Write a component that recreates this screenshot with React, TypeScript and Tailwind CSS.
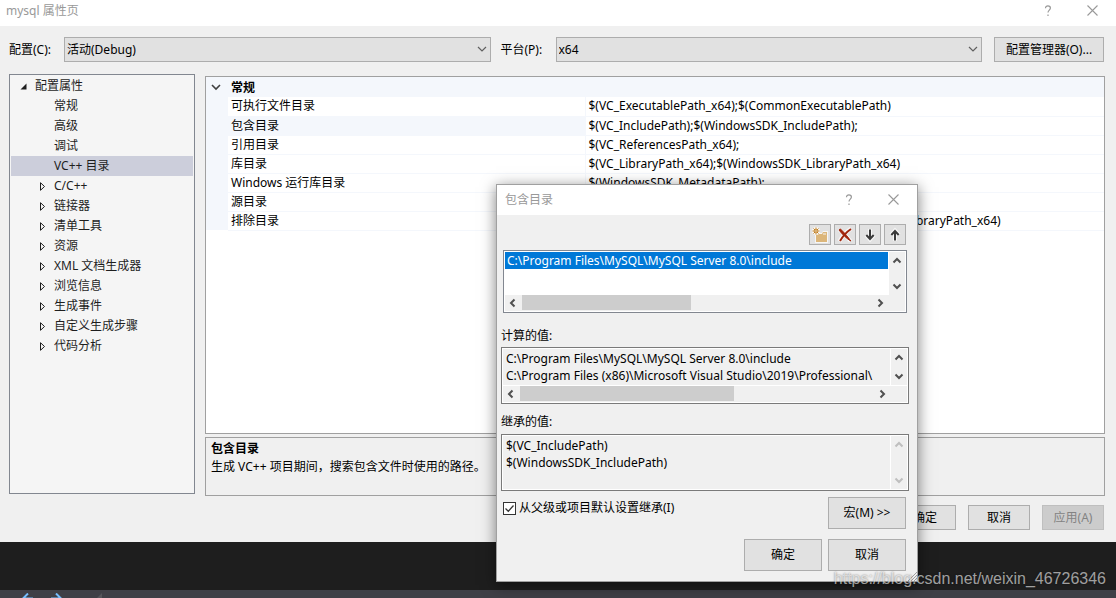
import React, { useState } from 'react';

const TREE_ITEMS = [
    { label: '常规', branch: false },
    { label: '高级', branch: false },
    { label: '调试', branch: false },
    { label: 'VC++ 目录', branch: false },
    { label: 'C/C++', branch: true },
    { label: '链接器', branch: true },
    { label: '清单工具', branch: true },
    { label: '资源', branch: true },
    { label: 'XML 文档生成器', branch: true },
    { label: '浏览信息', branch: true },
    { label: '生成事件', branch: true },
    { label: '自定义生成步骤', branch: true },
    { label: '代码分析', branch: true },
];

const PROPERTIES = [
    { name: '可执行文件目录', value: '$(VC_ExecutablePath_x64);$(CommonExecutablePath)' },
    { name: '包含目录', value: '$(VC_IncludePath);$(WindowsSDK_IncludePath);' },
    { name: '引用目录', value: '$(VC_ReferencesPath_x64);' },
    { name: '库目录', value: '$(VC_LibraryPath_x64);$(WindowsSDK_LibraryPath_x64)' },
    { name: 'Windows 运行库目录', value: '$(WindowsSDK_MetadataPath);' },
    { name: '源目录', value: '$(VC_SourcePath);' },
    { name: '排除目录', value: '$(CommonExcludePath);$(VC_ExecutablePath_x64);$(VC_LibraryPath_x64)' },
];

const COMPUTED = [
    'C:\\Program Files\\MySQL\\MySQL Server 8.0\\include',
    'C:\\Program Files (x86)\\Microsoft Visual Studio\\2019\\Professional\\',
].join('\n');

const INHERITED = '$(VC_IncludePath)\n$(WindowsSDK_IncludePath)';

/* Window chrome */

const TitleBar = ({ title, className }: { title: string; className: string }) => (
    <div className={`flex items-center bg-white text-[#999999] ${className}`}>
        <span className="flex-1">{title}</span>
        <button type="button" aria-label="帮助" className="flex w-5 justify-center">
            <svg width="8" height="12" viewBox="0 0 8 12" fill="none" stroke="currentColor" strokeWidth="1.2">
                <path d="M1.5 3.2C1.5 1.6 2.5.9 3.9.9c1.500 0 2.500.8 2.500 2.100 0 2-2.400 2.200-2.400 4.600M4 9.600v1.500" />
            </svg>
        </button>
        <button type="button" aria-label="关闭" className="ml-6 flex w-5 justify-center">
            <svg width="11" height="11" viewBox="0 0 11 11" stroke="currentColor" strokeWidth="1.1">
                <path d="M.5.5l10 10M10.500.5l-10 10" />
            </svg>
        </button>
    </div>
);

interface ComboProps {
    id: string;
    label: string;
    options: string[];
}

const Combo: React.FC<ComboProps> = ({ id, label, options }) => (
    <div className="flex flex-1 items-center">
        <label htmlFor={id} className="shrink-0 basis-[54px] whitespace-nowrap">{label}</label>
        <div className="relative ml-px flex-1">
            <select
                id={id}
                className="block h-[25px] w-full appearance-none border border-[#adadad] bg-[#e1e1e1] pl-0.5 pr-6 pt-px"
            >
                {options.map(option => (
                    <option key={option}>{option}</option>
                ))}
            </select>
            <svg
                className="pointer-events-none absolute right-1 top-[9px] text-[#606060]"
                width="10" height="7" viewBox="0 0 10 7" fill="none" stroke="currentColor" strokeWidth="1.2"
            >
                <path d="M1 1l4 4 4-4" />
            </svg>
        </div>
    </div>
);

interface PushButtonProps {
    className: string;
    disabled?: boolean;
    children: React.ReactNode;
}

const PushButton: React.FC<PushButtonProps> = ({ className, disabled, children }) => (
    <button
        type="button"
        disabled={disabled}
        className={`border border-[#adadad] bg-[#e1e1e1] whitespace-nowrap disabled:border-[#bfbfbf] disabled:bg-[#cccccc] disabled:text-[#838383] ${className}`}
    >
        {children}
    </button>
);

const ToolButton = ({ label, children }: { label: string; children: React.ReactNode }) => (
    <button
        type="button"
        aria-label={label}
        className="flex h-[21px] w-[22px] items-center justify-center border border-[#adadad] bg-[#e1e1e1]"
    >
        <svg width="16" height="16" viewBox="0 0 16 16" fill="none">
            {children}
        </svg>
    </button>
);

/* Scroll bars */

const ARROWS = {
    up: 'M1.500 6.500L5 3l3.500 3.500',
    down: 'M1.500 3.500L5 7l3.500-3.500',
    left: 'M6.500 1.500L3 5l3.500 3.500',
    right: 'M3.500 1.500L7 5 3.500 8.500',
};

const ScrollArrow = ({ dir }: { dir: keyof typeof ARROWS }) => (
    <svg width="10" height="10" viewBox="0 0 10 10" fill="none" stroke="currentColor" strokeWidth="2">
        <path d={ARROWS[dir]} />
    </svg>
);

const VerticalBar = ({ className }: { className: string }) => (
    <div className={`flex w-4 shrink-0 flex-col items-center justify-between bg-[#f0f0f0] ${className}`}>
        <ScrollArrow dir="up" />
        <ScrollArrow dir="down" />
    </div>
);

const HorizontalBar = ({ thumb }: { thumb: string }) => (
    <div className="mr-4 flex h-[15px] items-center justify-between bg-[#f0f0f0] pl-[3px] pr-1 text-[#505050]">
        <ScrollArrow dir="left" />
        <div className="ml-1 h-full flex-1">
            <div className={`h-full bg-[#cdcdcd] ${thumb}`} />
        </div>
        <ScrollArrow dir="right" />
    </div>
);

const PropertyTree = () => {
    const [selected, setSelected] = useState('VC++ 目录');

    return (
        <div className="mb-0.5 w-[186px] shrink-0 border border-[#828790] bg-[#f5f5f5] p-px text-[#1e1e1e]">
            <div className="flex h-5 items-center">
                <svg className="ml-[9px] mr-2" width="7" height="7" viewBox="0 0 7 7">
                    <path d="M6.500.5v6h-6z" fill="#1e1e1e" />
                </svg>
                配置属性
            </div>
            <ul>
                {TREE_ITEMS.map(item => (
                    <li
                        key={item.label}
                        onClick={() => setSelected(item.label)}
                        className={`flex h-5 items-center ${item.label === selected ? 'bg-[#cccedb]' : ''}`}
                    >
                        <span className="w-[43px] shrink-0 pl-7">
                            {item.branch && (
                                <svg width="7" height="9" viewBox="0 0 7 9" fill="none" stroke="#1e1e1e">
                                    <path d="M1.500.7v7.600l4-3.800z" />
                                </svg>
                            )}
                        </span>
                        {item.label}
                    </li>
                ))}
            </ul>
        </div>
    );
};

const PropertyGrid = () => (
    <div className="min-h-[358px] border border-[#a0a0a0] bg-white">
        <table className="w-full table-fixed border-collapse text-left">
            <colgroup>
                <col className="w-[22px]" />
                <col className="w-[357px]" />
                <col />
            </colgroup>
            <thead>
                <tr className="h-5 bg-[#f4f7fc]">
                    <th className="p-0">
                        <svg className="ml-[5px]" width="10" height="7" viewBox="0 0 10 7" fill="none" stroke="#404040" strokeWidth="1.600">
                            <path d="M1 1l4 4 4-4" />
                        </svg>
                    </th>
                    <th colSpan={2} className="p-0 pl-[3px] pt-0.5 font-bold">常规</th>
                </tr>
            </thead>
            <tbody>
                {PROPERTIES.map(prop => (
                    <tr key={prop.name} className="h-[19px]">
                        <td className="bg-[#f4f7fc] p-0" />
                        <td
                            className={`border-b border-r border-[#f4f7fc] p-0 pl-[3px] ${prop.name === '包含目录' ? 'bg-[#f4f7fc]' : ''}`}
                        >
                            {prop.name}
                        </td>
                        <td className="whitespace-nowrap border-b border-[#f4f7fc] p-0 pl-[3px]">
                            {prop.value}
                        </td>
                    </tr>
                ))}
            </tbody>
        </table>
    </div>
);

const IncludeDialog = () => {
    const [inherit, setInherit] = useState(true);

    return (
        <div
            role="dialog"
            aria-label="包含目录"
            className="absolute left-[496px] top-[184px] w-[422px] border border-[#a0a0a0] bg-[#f0f0f0] shadow-[0_3px_14px_rgba(0,0,0,0.5)]"
        >
            <TitleBar title="包含目录" className="h-[30px] pb-px pl-2 pr-3.5" />

            <div className="flex flex-col px-1 pb-2.5 pt-[9px]">
                <div className="flex justify-end gap-[3px] pr-[7px]">
                    <ToolButton label="新行">
                        <path d="M3 6h7l1-2h5v12H3z" fill="#f6f6f6" />
                        <path d="M4 7h6l1-2h4v10H4z" fill="#dcb67a" />
                        <path d="M11 7h3" stroke="#f6f6f6" />
                        <circle cx="4" cy="4" r="4" fill="#f6f6f6" />
                        <path d="M4 .5v2M4 5.500v2M.5 4h2M5.500 4h2M1.500 1.500l1.500 1.500M5 5l1.500 1.500M6.500 1.500L5 3M3 5L1.500 6.500" stroke="#c27d1a" />
                        <circle cx="4" cy="4" r="1.300" stroke="#c27d1a" />
                    </ToolButton>
                    <ToolButton label="删除">
                        <path d="M2 2.500c4 3 8 7 11.500 11.500M14 1.500C9 5 5 9.500 2.500 14.500" stroke="#f6f6f6" strokeWidth="4" />
                        <path d="M2 3c1-1.500 2-1 3 .5 3 3 6 6.500 8.800 10.500C10 12 5 7 2 3z" fill="#a1260d" stroke="#a1260d" />
                        <path d="M14 2C9.500 5 6 9 3 14" stroke="#a1260d" strokeWidth="2" />
                    </ToolButton>
                    <ToolButton label="下移">
                        <path d="M8 2v11M4 8l4 4.500L12 8" stroke="#f6f6f6" strokeWidth="4" />
                        <path d="M8 2.500V12M4.300 8L8 12l3.700-4" stroke="#3a3a3a" strokeWidth="2" />
                    </ToolButton>
                    <ToolButton label="上移">
                        <path d="M8 14V3M4 8l4-4.500L12 8" stroke="#f6f6f6" strokeWidth="4" />
                        <path d="M8 13.500V4M4.300 8L8 4l3.700 4" stroke="#3a3a3a" strokeWidth="2" />
                    </ToolButton>
                </div>

                <div className="ml-0.5 mr-1.5 mt-[5px] border border-[#828790] bg-white p-px">
                    <div className="flex">
                        <ul role="listbox" aria-label="包含目录" className="mr-px h-[43px] min-w-0 flex-1">
                            <li
                                role="option"
                                aria-selected="true"
                                className="h-[17px] whitespace-nowrap bg-[#0078d7] pl-0.5 leading-[18px] text-white"
                            >
                                C:\Program Files\MySQL\MySQL Server 8.0\include
                            </li>
                        </ul>
                        <VerticalBar className="py-1 text-[#505050]" />
                    </div>
                    <div className="bg-[#f0f0f0]">
                        <HorizontalBar thumb="w-[48%]" />
                        <div className="h-px" />
                    </div>
                </div>

                <label htmlFor="computed" className="mt-[13px] h-[18px] leading-5">计算的值:</label>
                <div className="mr-1 mt-[3px] border border-[#7a7a7a] bg-white p-px">
                    <div className="flex">
                        <textarea
                            id="computed"
                            readOnly
                            wrap="off"
                            value={COMPUTED}
                            className="mr-px block h-9 min-w-0 flex-1 resize-none overflow-hidden border-r-4 border-[#f0f0f0] bg-[#f0f0f0] pl-[3px] pt-px leading-[17px] outline-none"
                        />
                        <VerticalBar className="py-1 text-[#505050]" />
                    </div>
                    <div className="mt-px bg-[#f0f0f0]">
                        <HorizontalBar thumb="w-[60%]" />
                        <div className="h-px" />
                    </div>
                </div>

                <label htmlFor="inherited" className="mt-2 h-[18px] leading-5">继承的值:</label>
                <div className="mr-1 mt-1 flex border border-[#7a7a7a] bg-white p-px">
                    <textarea
                        id="inherited"
                        readOnly
                        value={INHERITED}
                        className="mr-px block h-[53px] min-w-0 flex-1 resize-none overflow-hidden bg-[#f0f0f0] pl-[3px] pt-px leading-[17px] outline-none"
                    />
                    <VerticalBar className="py-1 text-[#bfbfbf]" />
                </div>

                <div className="mt-1.5 flex items-start justify-between pl-0.5 pr-[7px]">
                    <label className="mt-[3px] flex items-center">
                        <span className="relative mr-[3px] flex">
                            <input
                                type="checkbox"
                                checked={inherit}
                                onChange={e => setInherit(e.target.checked)}
                                className="size-[13px] appearance-none border border-[#333333] bg-white"
                            />
                            {inherit && (
                                <svg
                                    className="pointer-events-none absolute inset-0"
                                    width="13" height="13" viewBox="0 0 13 13" fill="none" stroke="#333333" strokeWidth="1.300"
                                >
                                    <path d="M2.500 6.500l2.800 2.800 5.200-5.800" />
                                </svg>
                            )}
                        </span>
                        从父级或项目默认设置继承(I)
                    </label>
                    <PushButton className="h-8 w-[78px]">宏(M) &gt;&gt;</PushButton>
                </div>

                <div className="mt-2.5 flex justify-end gap-1.5 pr-[7px]">
                    <PushButton className="h-8 w-[78px]">确定</PushButton>
                    <PushButton className="h-8 w-[78px]">取消</PushButton>
                </div>
            </div>

            {/* Resize grip */}
            <svg className="absolute bottom-0 right-0" width="9" height="9" viewBox="0 0 9 9" stroke="#a0a0a0">
                <path d="M0 9l9-9M3 9l6-6M6 9l3-3" />
            </svg>
        </div>
    );
};

export default function App() {
    return (
        <div className="relative flex min-h-screen flex-col overflow-hidden bg-[#1e1e1e] font-['Noto_Sans','Noto_Sans_CJK_SC',sans-serif] text-xs text-black">
            <main className="bg-[#f0f0f0]">
                <TitleBar title="mysql 属性页" className="h-[26px] pb-[5px] pl-1.5 pr-3.5" />

                <div className="flex flex-col px-[9px] pb-3 pt-[11px]">
                    <div className="flex items-center gap-2.5 pr-[3px]">
                        <Combo id="configuration" label="配置(C):" options={['活动(Debug)', 'Debug', 'Release']} />
                        <Combo id="platform" label="平台(P):" options={['x64', 'Win32']} />
                        <PushButton className="ml-0.5 h-[25px] w-[110px]">配置管理器(O)...</PushButton>
                    </div>

                    <div className="mt-3 flex gap-2.5 pr-0.5">
                        <PropertyTree />
                        <div className="flex min-w-0 flex-1 flex-col gap-[3px] pt-0.5">
                            <PropertyGrid />
                            <div className="h-[59px] border border-[#a0a0a0] px-[5px] pt-0.5 leading-[18px]">
                                <h2 className="font-bold">包含目录</h2>
                                <p>生成 VC++ 项目期间，搜索包含文件时使用的路径。</p>
                            </div>
                        </div>
                    </div>

                    <div className="mt-[9px] flex justify-end gap-3 pr-[3px]">
                        <PushButton className="h-[25px] w-[62px]">确定</PushButton>
                        <PushButton className="h-[25px] w-[62px]">取消</PushButton>
                        <PushButton className="h-[25px] w-[62px]" disabled>应用(A)</PushButton>
                    </div>
                </div>
            </main>

            <div className="flex-1" />

            {/* Strip of the editor behind the windows */}
            <footer className="flex h-2 items-start gap-[18px] overflow-hidden bg-[#3f3f46] pl-[22px] pt-[3px]">
                <svg width="11" height="11" viewBox="0 0 11 11" fill="none" stroke="#75beff" strokeWidth="2">
                    <path d="M6 .5L1 5.500l5 5M1 5.500h10" />
                </svg>
                <svg width="11" height="11" viewBox="0 0 11 11" fill="none" stroke="#75beff" strokeWidth="2">
                    <path d="M5 .5l5 5-5 5M10 5.500H0" />
                </svg>
                <svg className="ml-4" width="6" height="6" viewBox="0 0 6 6">
                    <path d="M6 0v6H0z" fill="#55555a" />
                </svg>
            </footer>

            <IncludeDialog />

            <p className="absolute bottom-[7px] right-2.5 font-['Liberation_Sans',sans-serif] text-base text-white/60 [text-shadow:0_0_2px_rgba(0,0,0,0.5)]">
                https://blog.csdn.net/weixin_46726346
            </p>
        </div>
    );
}
